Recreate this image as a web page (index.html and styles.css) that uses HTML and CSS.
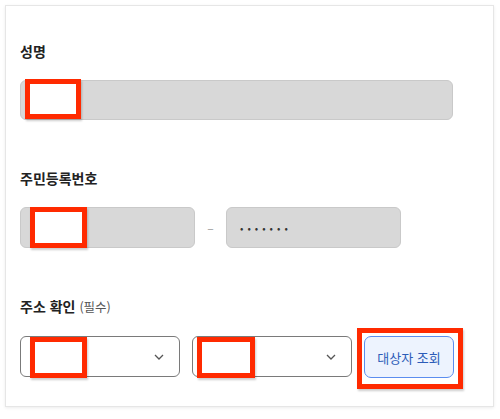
FILE: index.html
```
<!DOCTYPE html>
<html lang="ko">
<head>
  <meta charset="UTF-8" />
  <meta name="viewport" content="width=device-width, initial-scale=1.0"/>
  <title>대상자 조회</title>
  <link rel="stylesheet" href="styles.css">
</head>
<body>
  <div class="card">
    <div class="field">
      <label class="field-label">성명</label>
      <div class="text-box wide">
        <span class="mark mark-name"></span>
      </div>
    </div>

    <div class="field">
      <label class="field-label">주민등록번호</label>
      <div class="rrn-row">
        <div class="text-box half">
          <span class="mark mark-rrn"></span>
        </div>
        <span class="dash">–</span>
        <div class="text-box half">
          <span class="dots">•••••••</span>
        </div>
      </div>
    </div>

    <div class="field">
      <label class="field-label">주소 확인 <span class="hint">(필수)</span></label>
      <div class="addr-row">
        <div class="select-box">
          <span class="mark mark-sel1"></span>
          <svg class="chevron" width="10" height="6" viewBox="0 0 10 6"><path d="M1 1l4 4 4-4" fill="none" stroke="#555" stroke-width="1.3"/></svg>
        </div>
        <div class="select-box">
          <span class="mark mark-sel2"></span>
          <svg class="chevron" width="10" height="6" viewBox="0 0 10 6"><path d="M1 1l4 4 4-4" fill="none" stroke="#555" stroke-width="1.3"/></svg>
        </div>
        <div class="btn-wrap">
          <button type="button" class="search-btn">대상자 조회</button>
          <span class="mark mark-btn"></span>
        </div>
      </div>
    </div>
  </div>
</body>
</html>
```

FILE: styles.css
```
body {
  margin: 0;
  padding: 5px;
  background: #ffffff;
  font-family: "Noto Sans CJK KR", "Noto Sans", sans-serif;
  color: #222;
}

.card {
  width: 489px;
  box-sizing: border-box;
  border: 1px solid #e6e6e6;
  box-shadow: 0 1px 3px rgba(0,0,0,0.08);
  padding: 35px 14px 28px;
  display: flex;
  flex-direction: column;
  gap: 48px;
}

.field-label {
  display: block;
  font-size: 14px;
  font-weight: bold;
  line-height: 20px;
  margin-bottom: 19px;
  color: #222;
}

.hint {
  font-size: 12.5px;
  font-weight: normal;
  color: #555;
}

.text-box {
  position: relative;
  box-sizing: border-box;
  background: #d8d8d8;
  border: 1px solid #c9c9c9;
  border-radius: 6px;
  display: flex;
  align-items: center;
}

.wide {
  width: 433px;
  height: 40px;
}

.half {
  width: 175px;
  height: 41px;
}

.rrn-row {
  display: flex;
  align-items: center;
}

.dash {
  width: 31px;
  text-align: center;
  color: #999;
  font-size: 12px;
}

.dots {
  font-size: 10px;
  letter-spacing: 4px;
  padding-left: 13px;
  color: #333;
}

.addr-row {
  display: flex;
  align-items: flex-start;
  gap: 12px;
}

.select-box {
  position: relative;
  width: 160px;
  height: 41px;
  box-sizing: border-box;
  border: 1px solid #7a7a7a;
  border-radius: 6px;
  background: #fff;
}

.chevron {
  position: absolute;
  right: 15px;
  top: 17px;
}

.btn-wrap {
  position: relative;
}

.search-btn {
  width: 90px;
  height: 42px;
  box-sizing: border-box;
  background: #edf3fe;
  border: 1px solid #5b8def;
  border-radius: 7px;
  color: #2c5cb8;
  font-family: inherit;
  font-size: 13px;
  padding: 0;
  cursor: pointer;
}

.mark {
  position: absolute;
  box-sizing: border-box;
  border: 5px solid #ff2a00;
  background: #fff;
  box-shadow: 1px 2px 2px rgba(0,0,0,0.2);
}

.mark-name { left: 4px; top: -2px; width: 56px; height: 40px; }
.mark-rrn { left: 9px; top: -1px; width: 57px; height: 41px; }
.mark-sel1 { left: 9px; top: 0; width: 57px; height: 41px; }
.mark-sel2 { left: 4px; top: 0; width: 58px; height: 41px; }
.mark-btn { left: -7px; top: -8px; width: 106px; height: 61px; background: transparent; }
```
